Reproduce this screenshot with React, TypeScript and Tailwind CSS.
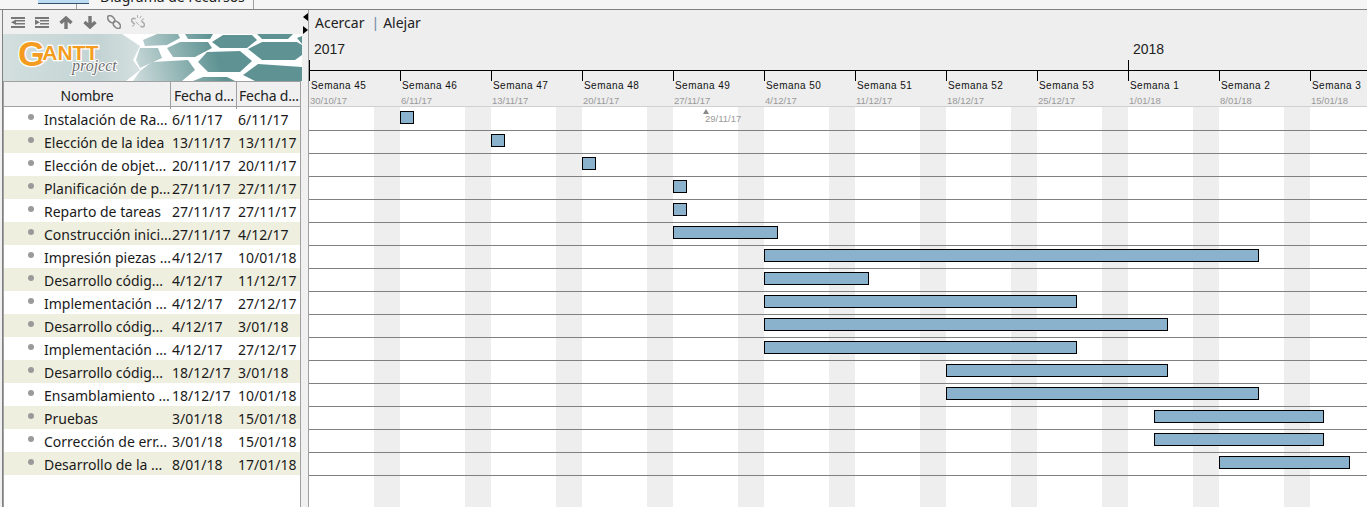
const tasks = [
  { name: 'Instalación de Ra...', start: '6/11/17', end: '6/11/17', from: 400, to: 414 },
  { name: 'Elección de la idea', start: '13/11/17', end: '13/11/17', from: 491, to: 505 },
  { name: 'Elección de objet...', start: '20/11/17', end: '20/11/17', from: 582, to: 596 },
  { name: 'Planificación de p...', start: '27/11/17', end: '27/11/17', from: 673, to: 687 },
  { name: 'Reparto de tareas', start: '27/11/17', end: '27/11/17', from: 673, to: 687 },
  { name: 'Construcción inici...', start: '27/11/17', end: '4/12/17', from: 673, to: 778 },
  { name: 'Impresión piezas ...', start: '4/12/17', end: '10/01/18', from: 764, to: 1259 },
  { name: 'Desarrollo códig...', start: '4/12/17', end: '11/12/17', from: 764, to: 869 },
  { name: 'Implementación ...', start: '4/12/17', end: '27/12/17', from: 764, to: 1077 },
  { name: 'Desarrollo códig...', start: '4/12/17', end: '3/01/18', from: 764, to: 1168 },
  { name: 'Implementación ...', start: '4/12/17', end: '27/12/17', from: 764, to: 1077 },
  { name: 'Desarrollo códig...', start: '18/12/17', end: '3/01/18', from: 946, to: 1168 },
  { name: 'Ensamblamiento ...', start: '18/12/17', end: '10/01/18', from: 946, to: 1259 },
  { name: 'Pruebas', start: '3/01/18', end: '15/01/18', from: 1154, to: 1324 },
  { name: 'Corrección de err...', start: '3/01/18', end: '15/01/18', from: 1154, to: 1324 },
  { name: 'Desarrollo de la ...', start: '8/01/18', end: '17/01/18', from: 1219, to: 1350 },
];

const weeks = [
  ['Semana 45', '30/10/17'],
  ['Semana 46', '6/11/17'],
  ['Semana 47', '13/11/17'],
  ['Semana 48', '20/11/17'],
  ['Semana 49', '27/11/17'],
  ['Semana 50', '4/12/17'],
  ['Semana 51', '11/12/17'],
  ['Semana 52', '18/12/17'],
  ['Semana 53', '25/12/17'],
  ['Semana 1', '1/01/18'],
  ['Semana 2', '8/01/18'],
  ['Semana 3', '15/01/18'],
];

const CHART_LEFT = 309;

function IndentIcon({ flip }: { flip?: boolean }) {
  return (
    <svg width="14" height="11" viewBox="0 0 14 11" fill="#777">
      <rect x="0" y="0" width="14" height="2" />
      <rect x="5" y="3" width="9" height="1.5" />
      <rect x="5" y="6" width="9" height="1.5" />
      <rect x="0" y="9" width="14" height="2" />
      {flip ? <polygon points="5,5.3 0,2.5 0,8" /> : <polygon points="0,5.3 5,2.5 5,8" />}
    </svg>
  );
}

function MoveIcon({ down }: { down?: boolean }) {
  return (
    <svg width="14" height="13" viewBox="0 0 14 13" fill="none" stroke="#777" strokeWidth="3.4">
      {down ? (
        <path d="M7 0V11M1.5 6L7 11L12.5 6" />
      ) : (
        <path d="M7 13V2M1.5 7L7 2L12.5 7" />
      )}
    </svg>
  );
}

function LinkIcon() {
  return (
    <svg width="14" height="14" viewBox="0 0 15 15" fill="none" stroke="#888" strokeWidth="1.8">
      <ellipse cx="4.5" cy="4.5" rx="4.6" ry="3" transform="rotate(45 4.5 4.5)" />
      <ellipse cx="10.5" cy="10.5" rx="4.6" ry="3" transform="rotate(45 10.5 10.5)" />
    </svg>
  );
}

function UnlinkIcon() {
  return (
    <svg width="14" height="15" viewBox="0 0 15 16" fill="none" stroke="#aaa" strokeWidth="1.7">
      <path d="M5 4L2.5 3.5C0.5 4 0 6 1.5 7.5L4 10" />
      <path d="M10 12L12.5 12.8C14.5 12.5 15 10 13.5 8.5L11 6" />
      <path d="M5 7L9 11M7 0V3M11 1L9.5 3.5M14 4L11.5 5M1 12L3.5 11" strokeWidth="1" />
    </svg>
  );
}

function Banner() {
  return (
    <svg width="299" height="47" viewBox="3 34 299 47" className="block shrink-0">
      <defs>
        <linearGradient id="left" x1="0" x2="1" y1="0" y2="0">
          <stop offset="0" stopColor="#d3dfdf" />
          <stop offset="0.7" stopColor="#c3d3d3" />
          <stop offset="1" stopColor="#d5e0e0" />
        </linearGradient>
        <linearGradient id="hex" gradientUnits="userSpaceOnUse" x1="135" y1="75" x2="215" y2="50">
          <stop offset="0" stopColor="#cbdada" />
          <stop offset="1" stopColor="#5f9393" />
        </linearGradient>
      </defs>
      <rect x="3" y="34" width="299" height="47" fill="#ffffff" />
      <polygon points="3,34 122,34 140,46 133,60 140,70 126,81 3,81" fill="url(#left)" />
      <g fill="url(#hex)">
        <polygon points="198,62 207,52 240,51 252,61 240,72 208,72" />
        <polygon points="212,42 223,35 252,35 257,40 247,48 220,48" />
        <polygon points="248,49 262,42 297,42 302,45 302,55 295,60 262,60" />
        <polygon points="243,75 258,64 302,67 302,81 255,81" />
        <polygon points="167,48 180,42 208,42 212,48 195,57 173,57" />
        <polygon points="140,71 152,62 188,60 195,70 182,81 133,81" />
        <polygon points="143,40 157,34 178,34 180,38 167,45 145,46" />
        <polygon points="185,34 213,34 210,39 188,39" />
        <polygon points="257,34 293,34 288,39 262,39" />
        <polygon points="297,38 302,36 302,44" />
        <polygon points="193,81 203,77 227,77 235,81" />
        <polygon points="140,48 158,48 162,58 140,68 136,60" />
      </g>
      <text
        x="18"
        y="66"
        fontFamily="'Liberation Sans', sans-serif"
        fontWeight="700"
        fill="#f39c1f"
        stroke="#ffffff"
        strokeWidth="2.5"
        paintOrder="stroke"
      >
        <tspan fontSize="35">G</tspan>
        <tspan fontSize="21" dx="-3" dy="-6">ANTT</tspan>
      </text>
      <text
        x="72"
        y="71"
        fontFamily="'Liberation Serif', serif"
        fontStyle="italic"
        fontSize="16"
        fill="#6f6f6f"
        stroke="#ffffff"
        strokeWidth="2"
        paintOrder="stroke"
      >
        project
      </text>
    </svg>
  );
}

function TaskPanel() {
  return (
    <div className="flex w-[300px] shrink-0 flex-col border-l border-[#808080] bg-[#f0f0f0]">
      <div className="flex h-[24px] shrink-0 items-center gap-[10px] pl-[8px]">
        <IndentIcon />
        <IndentIcon flip />
        <MoveIcon />
        <MoveIcon down />
        <LinkIcon />
        <UnlinkIcon />
      </div>
      <Banner />
      <div className="mr-[1px] flex-1 border-x border-[#a0a0a0] bg-white">
        <div className="grid h-[26px] grid-cols-[167px_66px_1fr] border-y border-[#a0a0a0] bg-[#f0f0f0] text-[14px] leading-[27px] tracking-[-0.2px] text-[#222]">
          <div className="border-r border-[#a0a0a0] text-center">Nombre</div>
          <div className="whitespace-nowrap border-r border-[#a0a0a0] pl-[3px]">Fecha d...</div>
          <div className="whitespace-nowrap pl-[2px]">Fecha d...</div>
        </div>
        {tasks.map((t, i) => (
          <div
            key={i}
            className={`grid h-[23px] grid-cols-[168px_66px_1fr] items-center whitespace-nowrap pt-[2px] text-[14px] leading-[21px] text-[#1a1a1a] ${i % 2 ? 'bg-[#efefe0]' : 'bg-white'}`}
          >
            <div className="flex items-center">
              <span className="ml-[24px] h-[6px] w-[6px] shrink-0 -translate-y-[3px] rounded-full bg-[#9a9a9a]" />
              <span className="ml-[10px]">{t.name}</span>
            </div>
            <div>{t.start}</div>
            <div>{t.end}</div>
          </div>
        ))}
      </div>
    </div>
  );
}

function Chart() {
  return (
    <div className="flex min-w-0 flex-1 flex-col overflow-hidden border-l border-[#a0a0a0]">
      <div className="h-[97px] shrink-0 overflow-hidden border-b border-[#d0d0d0] bg-[#eeeeee]">
        <div className="h-[31px] pl-[6px] pt-px text-[14px] leading-[24px] text-[#222]">
          Acercar<span className="ml-[7px] mr-[4px] font-medium text-[#6f8fa8]">|</span>Alejar
        </div>
        <div className="flex h-[30px] border-b border-black font-['Liberation_Sans'] text-[14px] leading-[16px] text-[#222]">
          <div className="relative w-[819px] shrink-0 pl-[5px]">
            2017
            <span className="absolute bottom-[-10px] left-0 h-[20px] w-px bg-black" />
          </div>
          <div className="relative flex-1 pl-[5px]">
            2018
            <span className="absolute bottom-[-10px] left-0 h-[20px] w-px bg-black" />
          </div>
        </div>
        <div className="flex font-['Liberation_Sans']">
          {weeks.map(([label, date]) => (
            <div key={label} className="w-[91px] shrink-0 whitespace-nowrap">
              <div className="h-[10px] w-px bg-black" />
              <div className="pl-[2px] text-[10px] leading-[10px] tracking-[0.45px] text-[#111]">{label}</div>
              <div className="mt-[5px] pl-[1px] text-[9.5px] leading-[10px] text-[#9a9a9a]">{date}</div>
            </div>
          ))}
        </div>
      </div>
      <div className="relative flex-1 bg-[repeating-linear-gradient(90deg,#ffffff_0,#ffffff_65px,#eeeeee_65px,#eeeeee_91px)] pt-px">
        <div className="absolute left-[394px] top-[2px] font-['Liberation_Sans'] text-[9.5px] leading-[10px] text-[#9a9a9a]">
          <div className="h-0 w-0 border-x-[3px] border-b-[5px] border-x-transparent border-b-[#888]" />
          <div className="ml-[2px]">29/11/17</div>
        </div>
        {tasks.map((t, i) => (
          <div key={i} className="relative h-[23px] border-b border-[#808080] pt-[3px]">
            <div
              className="h-[13px] border border-black bg-[#8ab2cc]"
              style={{ marginLeft: t.from - CHART_LEFT, width: t.to - t.from }}
            />
          </div>
        ))}
      </div>
    </div>
  );
}

export default function App() {
  return (
    <div className="flex h-[507px] w-[1367px] flex-col overflow-hidden bg-[#f0f0f0] font-['Noto_Sans',sans-serif]">
      <div className="flex h-[10px] shrink-0 items-start overflow-hidden border-b border-[#808080] bg-[#f5f5f5]">
        <div className="z-10 ml-[38px] h-[4px] w-[51px] border-b border-[#33506e] bg-[#bcdcf4]" />
        <div className="-ml-[13px] h-[9px] w-[178px] overflow-hidden border-x border-[#a0a0a0] bg-[#f5f5f5] pl-[23px] text-[14px] leading-[20px] text-[#222]">
          <div className="-mt-[13px] whitespace-nowrap">Diagrama de recursos</div>
        </div>
      </div>
      <div className="flex min-h-0 flex-1">
        <div className="w-[2px] shrink-0" />
        <TaskPanel />
        <div className="flex w-[6px] shrink-0 flex-col items-center gap-[5px] pt-[3px]">
          <span className="h-0 w-0 border-y-[4px] border-r-[5px] border-y-transparent border-r-black" />
          <span className="h-0 w-0 border-y-[4px] border-l-[5px] border-y-transparent border-l-black" />
        </div>
        <Chart />
      </div>
    </div>
  );
}
